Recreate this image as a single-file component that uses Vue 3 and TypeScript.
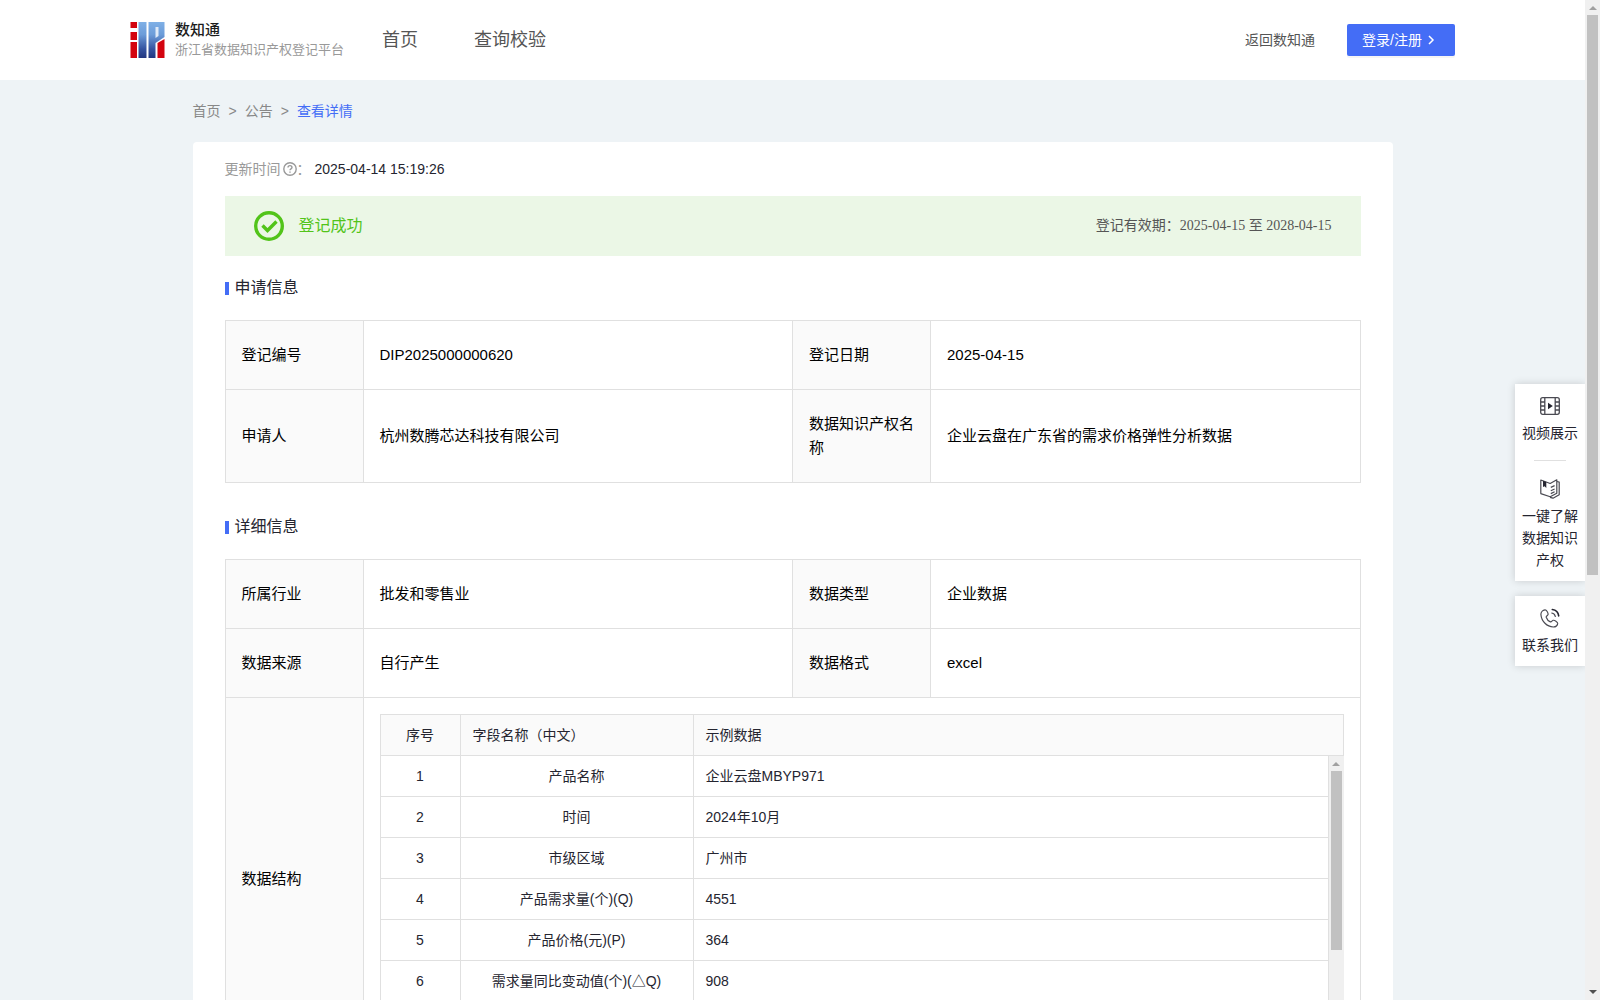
<script setup lang="ts">
interface Pair {
  label: string
  value: string
}

interface Field {
  name: string
  sample: string
}

const crumbs: string[] = ['首页', '公告']

const applyRows: Pair[][] = [
  [
    { label: '登记编号', value: 'DIP2025000000620' },
    { label: '登记日期', value: '2025-04-15' },
  ],
  [
    { label: '申请人', value: '杭州数腾芯达科技有限公司' },
    { label: '数据知识产权名称', value: '企业云盘在广东省的需求价格弹性分析数据' },
  ],
]

const detailRows: Pair[][] = [
  [
    { label: '所属行业', value: '批发和零售业' },
    { label: '数据类型', value: '企业数据' },
  ],
  [
    { label: '数据来源', value: '自行产生' },
    { label: '数据格式', value: 'excel' },
  ],
]

const fields: Field[] = [
  { name: '产品名称', sample: '企业云盘MBYP971' },
  { name: '时间', sample: '2024年10月' },
  { name: '市级区域', sample: '广州市' },
  { name: '产品需求量(个)(Q)', sample: '4551' },
  { name: '产品价格(元)(P)', sample: '364' },
  { name: '需求量同比变动值(个)(△Q)', sample: '908' },
]
</script>

<template>
  <div class="shell">
    <div class="page">
      <header class="header">
        <a class="brand" href="#">
          <svg class="brand-mark" viewBox="0 0 34 36" aria-hidden="true">
            <defs>
              <linearGradient id="brandBlue" x1="0" y1="0" x2="0" y2="1">
                <stop offset="0" stop-color="#7fb0e6" />
                <stop offset="0.35" stop-color="#6c9cd9" />
                <stop offset="0.75" stop-color="#3553a0" />
                <stop offset="1" stop-color="#22367f" />
              </linearGradient>
            </defs>
            <path fill="#d3040f" d="M0 0h6.500v6H0zM0 10h6.500v8H0zM0 20h6.500v16H0z" />
            <path fill="url(#brandBlue)" d="M8 0h8v36H8z" />
            <path fill="url(#brandBlue)" d="M18 0h16v15l-9 6v15h-7z" />
            <path fill="#dfeaf8" d="M25 5h3v9l-3 2z" />
            <path fill="#d3040f" d="M27 21l7-4v19h-7z" />
          </svg>
          <span class="brand-text">
            <strong>数知通</strong>
            <span>浙江省数据知识产权登记平台</span>
          </span>
        </a>
        <nav class="nav">
          <a href="#">首页</a>
          <a href="#">查询校验</a>
        </nav>
        <a class="back" href="#">返回数知通</a>
        <button class="login" type="button">
          登录/注册
          <svg viewBox="0 0 12 12" aria-hidden="true"><path d="M4 2l4 4-4 4" /></svg>
        </button>
      </header>

      <main class="container">
        <nav class="crumbs">
          <template v-for="c in crumbs" :key="c">
            <a href="#">{{ c }}</a>
            <span class="sep">&gt;</span>
          </template>
          <span class="current">查看详情</span>
        </nav>

        <section class="card">
          <div class="updated">
            <span>更新时间</span>
            <svg viewBox="0 0 14 14" aria-hidden="true">
              <circle cx="7" cy="7" r="6.200" />
              <path d="M5 5.600c0-2.600 4-2.600 4 0 0 1.400-2 1.300-2 2.700M7 9.400v1.300" />
            </svg>
            <span class="colon">：</span>
            <time>2025-04-14 15:19:26</time>
          </div>

          <div class="banner">
            <svg viewBox="0 0 30 30" aria-hidden="true">
              <circle cx="15" cy="15" r="13.300" />
              <path d="M8.500 14.500l5 5 9-9" />
            </svg>
            <span class="status">登记成功</span>
            <span class="valid">登记有效期：2025-04-15 至 2028-04-15</span>
          </div>

          <h2 class="title">申请信息</h2>
          <table class="info">
            <colgroup>
              <col class="c-label" /><col /><col class="c-label" /><col />
            </colgroup>
            <tbody>
              <tr v-for="(row, i) in applyRows" :key="i">
                <template v-for="p in row" :key="p.label">
                  <th scope="row">{{ p.label }}</th>
                  <td>{{ p.value }}</td>
                </template>
              </tr>
            </tbody>
          </table>

          <h2 class="title spaced">详细信息</h2>
          <table class="info">
            <colgroup>
              <col class="c-label" /><col /><col class="c-label" /><col />
            </colgroup>
            <tbody>
              <tr v-for="(row, i) in detailRows" :key="i">
                <template v-for="p in row" :key="p.label">
                  <th scope="row">{{ p.label }}</th>
                  <td>{{ p.value }}</td>
                </template>
              </tr>
              <tr>
                <th scope="row">数据结构</th>
                <td class="nested" colspan="3">
                  <table class="fields head">
                    <colgroup><col class="c-no" /><col class="c-name" /><col /></colgroup>
                    <thead>
                      <tr>
                        <th class="center" scope="col">序号</th>
                        <th scope="col">字段名称（中文）</th>
                        <th scope="col">示例数据</th>
                      </tr>
                    </thead>
                  </table>
                  <div class="fields-body">
                    <div class="fields-view">
                      <table class="fields">
                        <colgroup><col class="c-no" /><col class="c-name" /><col /></colgroup>
                        <tbody>
                          <tr v-for="(f, i) in fields" :key="f.name">
                            <td class="center">{{ i + 1 }}</td>
                            <td class="center">{{ f.name }}</td>
                            <td>{{ f.sample }}</td>
                          </tr>
                        </tbody>
                      </table>
                    </div>
                    <div class="rail" aria-hidden="true">
                      <i class="arrow up"></i>
                      <i class="thumb inner"></i>
                      <i class="arrow down"></i>
                    </div>
                  </div>
                </td>
              </tr>
            </tbody>
          </table>
        </section>
      </main>
    </div>

    <div class="rail" aria-hidden="true">
      <i class="arrow up"></i>
      <i class="thumb outer"></i>
      <i class="arrow down"></i>
    </div>

    <aside class="side">
      <div class="side-box">
        <a href="#">
          <svg viewBox="0 0 20 20" aria-hidden="true">
            <g fill="none" stroke="#4a4a52" stroke-width="1.300">
              <rect x="0.700" y="1.700" width="18.600" height="16.600" rx="2" />
              <path d="M4.800 2v16M15.200 2v16M1 6h4M1 10h4M1 14h4M15 6h4M15 10h4M15 14h4" />
            </g>
            <path fill="#252530" d="M8 6.800l4.800 3.200L8 13.200z" />
          </svg>
          <span>视频展示</span>
        </a>
        <hr />
        <a href="#">
          <svg viewBox="0 0 20 20" aria-hidden="true">
            <g fill="none" stroke="#4a4a52" stroke-width="1.200" stroke-linejoin="round">
              <path d="M.8 1l9.400 3.500L16.800.8v13.400l-6.600 3.600L.8 14.600z" />
              <path d="M17 2.500l2.200.6v12.600l-6.200 3.500-3-.8" />
              <path d="M10.800 8.400l3.800-1.800M10.800 11.800l3.800-1.800M10.800 14.600l3.800-1.800" />
            </g>
            <path fill="#252530" d="M3 1.800l3.300 1.200v6L4.600 7.200 3 8z" />
          </svg>
          <span>一键了解数据知识产权</span>
        </a>
      </div>
      <div class="side-box">
        <a href="#">
          <svg viewBox="0 0 20 20" aria-hidden="true">
            <g fill="none" stroke="#4a4a52" stroke-width="1.200" stroke-linecap="round" stroke-linejoin="round">
              <path d="M5 1.800C2.800 2 .8 4 .9 6.500 1.500 13.500 7 18.800 13.300 19c2.400 0 4.200-1.500 4.400-3.600.1-1.500-3.300-3.500-4.600-3.100-1.200.4-1.500 2-2.700 1.600C8.400 13 6.800 11 6.200 9.200c-.3-1.200 1.700-1.600 1.900-2.900C8.200 4.800 6.500 1.700 5 1.800z" />
              <path d="M11.800 5c2 .3 3.200 1.600 3.500 3.500" />
            </g>
            <path fill="none" stroke="#252530" stroke-width="1.600" stroke-linecap="round" d="M12.300 1.500c3.600.5 6 3 6.400 6.400" />
          </svg>
          <span>联系我们</span>
        </a>
      </div>
    </aside>
  </div>
</template>

<style>
html,
body {
  margin: 0;
  overflow: hidden;
}
</style>

<style scoped>
.shell {
  position: relative;
  display: flex;
  height: 100vh;
  font-family: 'Liberation Sans', 'Noto Sans CJK SC', sans-serif;
  font-size: 14px;
  line-height: 22px;
  color: #252530;
  background: #eef3f6;
}

.page {
  flex: 1;
  min-width: 0;
  overflow-y: auto;
  scrollbar-width: none;
}

a {
  color: inherit;
  text-decoration: none;
}

.header {
  display: flex;
  align-items: center;
  height: 80px;
  padding: 0 130px;
  background: #fff;
}

.brand {
  display: flex;
  align-items: center;
  gap: 10px;
}

.brand-mark {
  width: 35px;
  height: 36px;
}

.brand-text {
  display: flex;
  flex-direction: column;
  line-height: 20px;
  font-size: 13px;
  color: #999;
}

.brand-text strong {
  font-size: 15px;
  font-weight: 500;
  color: #1c1c1c;
}

.nav {
  display: flex;
  gap: 56px;
  flex: 1;
  margin-left: 38px;
  font-size: 18px;
  color: #555;
}

.back {
  margin-right: 32px;
  color: #555;
}

.login {
  display: flex;
  align-items: center;
  gap: 3px;
  box-sizing: border-box;
  width: 108px;
  height: 32px;
  padding: 0 15px;
  border: 0;
  border-radius: 2px;
  background: #446df6;
  box-shadow: 0 2px 0 rgba(0, 0, 0, 0.04);
  font: inherit;
  color: #fff;
  white-space: nowrap;
}

.login svg {
  width: 12px;
  height: 12px;
  fill: none;
  stroke: #fff;
  stroke-width: 1.500;
}

.container {
  max-width: 1200px;
  margin: 0 auto;
}

.crumbs {
  display: flex;
  gap: 8px;
  padding: 20px 0;
  color: #888;
}

.current {
  color: #446df6;
}

.card {
  padding: 0 32px 32px;
  border-radius: 4px;
  background: #fff;
}

.updated {
  display: flex;
  align-items: center;
  height: 54px;
  color: #999;
}

.updated svg {
  width: 14px;
  height: 14px;
  margin-left: 2px;
  fill: none;
  stroke: #999;
  stroke-width: 1.400;
}

.updated time {
  margin-left: 4px;
  color: #252530;
}

.banner {
  display: flex;
  align-items: center;
  height: 60px;
  padding: 0 29px;
  background: #ebf7e6;
}

.banner svg {
  width: 30px;
  height: 30px;
  fill: none;
  stroke: #52c41a;
  stroke-width: 3.400;
}

.status {
  flex: 1;
  margin-left: 15px;
  font-size: 16px;
  color: #52c41a;
}

.valid {
  font-family: 'Liberation Serif', 'Noto Sans CJK SC', serif;
  color: #555;
}

.title {
  display: flex;
  align-items: center;
  gap: 6px;
  margin: 20px 0;
  font-size: 16px;
  font-weight: 400;
  line-height: 24px;
}

.title::before {
  content: '';
  width: 4px;
  height: 13px;
  background: #446df6;
}

.title.spaced {
  margin-top: 32px;
}

table {
  width: 100%;
  table-layout: fixed;
  border-collapse: collapse;
}

th {
  font-weight: 400;
  text-align: left;
  background: #fafafa;
}

.c-label {
  width: 138px;
}

.info > tbody > tr > th,
.info > tbody > tr > td {
  padding: 22px 16px;
  border: 1px solid #e0e0e0;
  font-size: 15px;
  line-height: 24px;
  color: #000;
}

.info > tbody > tr > .nested {
  padding: 16px;
}

.c-no {
  width: 80px;
}

.c-name {
  width: 233px;
}

.fields th,
.fields td {
  padding: 9px 12px;
  border: 1px solid #e0e0e0;
  font-size: 14px;
  line-height: 22px;
  color: #252530;
}

.fields .center {
  text-align: center;
}

.fields-body {
  display: flex;
  height: 287px;
}

.fields-view {
  flex: 1;
  overflow-y: auto;
  scrollbar-width: none;
}

.fields-view tr:first-child td {
  border-top: 0;
}

.rail {
  display: flex;
  flex-direction: column;
  align-items: center;
  flex: none;
  width: 15px;
  background: #f0f0f0;
}

.arrow {
  border: solid transparent;
  border-width: 0 4px;
}

.arrow.up {
  margin: 6px 0 5px;
  border-bottom: 4px solid #a0a0a0;
}

.arrow.down {
  margin: auto 0 6px;
  border-top: 4px solid #505050;
}

.thumb {
  flex: none;
  width: 11px;
  background: #c1c1c1;
}

.thumb.outer {
  height: 56%;
}

.thumb.inner {
  height: 179px;
}

.side {
  position: absolute;
  top: 384px;
  right: 15px;
  display: flex;
  flex-direction: column;
  gap: 15px;
  width: 70px;
}

.side-box {
  padding: 12px 7px 10px;
  background: #fff;
  box-shadow: 0 0 8px rgba(0, 0, 0, 0.16);
  clip-path: inset(-10px 0 -10px -10px);
}

.side-box a {
  display: flex;
  flex-direction: column;
  align-items: center;
  gap: 6px;
  text-align: center;
}

.side-box svg {
  width: 20px;
  height: 20px;
}

.side-box hr {
  width: 32px;
  margin: 16px auto 18px;
  border: 0;
  border-top: 1px solid #e0e0e0;
}
</style>
